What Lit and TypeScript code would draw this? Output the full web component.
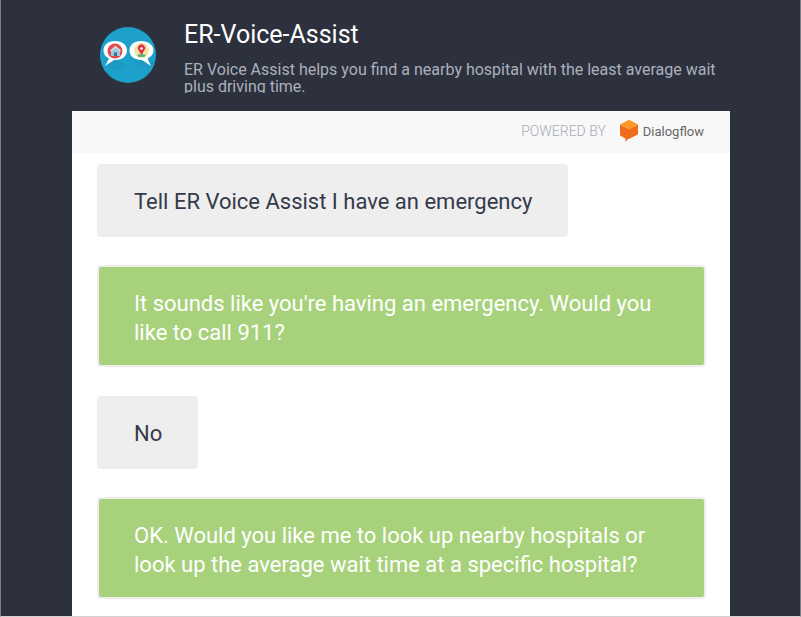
import { LitElement, html, css } from "lit";
import { customElement, property } from "lit/decorators.js";

interface Message {
  from: "user" | "bot";
  text: string;
}

@customElement("chat-bubble")
export class ChatBubble extends LitElement {
  @property({ reflect: true }) from: Message["from"] = "user";
  @property() text = "";

  static styles = css`
    :host {
      display: block;
      box-sizing: border-box;
      padding: 23px 36px 21px 37px;
      border-radius: 4px;
      background: #eeeeee;
      color: #343a49;
      margin-top: 29px;
    }
    :host(:first-child) {
      margin-top: 0;
    }
    :host([from="bot"]) {
      align-self: stretch;
      margin-top: 28px;
      padding: 22px 35px 18px;
      border: 2px solid #eeeeee;
      background: #a7d17b;
      color: #ffffff;
    }
    .text {
      margin: 0;
      font-size: 22px;
      line-height: 29px;
    }
  `;

  render() {
    return html`<p class="text">${this.text}</p>`;
  }
}

@customElement("app-root")
export class AppRoot extends LitElement {
  private messages: Message[] = [
    { from: "user", text: "Tell ER Voice Assist I have an emergency" },
    { from: "bot", text: "It sounds like you're having an emergency. Would you like to call 911?" },
    { from: "user", text: "No" },
    {
      from: "bot",
      text: "OK. Would you like me to look up nearby hospitals or look up the average wait time at a specific hospital?",
    },
  ];

  static styles = css`
    :host {
      display: flex;
      flex-direction: column;
      box-sizing: border-box;
      min-height: 100vh;
      padding: 0 70px 0 71px;
      border: 1px solid #7b7e85;
      border-top: 0;
      border-bottom-color: #d2d2d2;
      background: #2d313e;
      font-family: Roboto, "Liberation Sans", sans-serif;
      font-weight: 400;
    }
    .header {
      display: flex;
      gap: 28px;
      padding: 21px 0 18px 28px;
    }
    .avatar {
      flex: none;
      width: 56px;
      height: 56px;
      margin-top: 6px;
    }
    .about {
      min-width: 0;
      flex: 1;
    }
    .title {
      margin: 0 0 12px;
      font-size: 25px;
      line-height: 28px;
      font-weight: 400;
      color: #ffffff;
    }
    .description {
      margin: 0;
      height: 32px;
      overflow: hidden;
      font-size: 16px;
      line-height: 17px;
      color: #abb0bc;
    }
    .powered {
      display: flex;
      align-items: center;
      justify-content: flex-end;
      box-sizing: border-box;
      height: 42px;
      padding: 0 26px 2px 0;
      background: #f8f8f8;
      font-size: 14px;
      font-weight: 300;
      color: #a6aab8;
    }
    .brand {
      display: flex;
      align-items: center;
      gap: 5px;
      margin-left: 14px;
      color: #666666;
      font-size: 13px;
      font-weight: 400;
      text-decoration: none;
    }
    .brand svg {
      width: 18px;
      height: 22px;
    }
    .chat {
      flex: 1;
      display: flex;
      flex-direction: column;
      align-items: flex-start;
      padding: 11px 24px 17px 25px;
      background: #ffffff;
    }
  `;

  render() {
    return html`
      <header class="header">
        <svg class="avatar" viewBox="0 0 56 56" aria-hidden="true">
          <circle cx="28" cy="28" r="28" fill="#1da1cb" />
          <path d="M7 31 L18 33 L28 39 L20 44 L8 41Z M32 31 L47 33 L55 35 L49 42 L38 38Z" fill="#168aae" opacity=".3" />
          <path d="M15 14C8 14 3.500 18 3.500 23.500C3.500 27 5.500 30 9 31.500L5 39L14 33C22 33.500 27 29 27 23.500C27 18 22 14 15 14Z" fill="#fff" />
          <path d="M41 14C34 14 29.500 18 29.500 23.500C29.500 29 34 33 42 33L51 39L47.500 31.500C51 30 53.500 27 53.500 23.500C53.500 18 48 14 41 14Z" fill="#fff" />
          <circle cx="15" cy="24" r="7.500" fill="#e8474c" />
          <path d="M11 24L15.500 20L20 24V29H11Z" fill="#9cc9dc" />
          <path d="M10.500 24L15.500 19.500L20.500 24" fill="none" stroke="#d9eef5" stroke-width="1.200" />
          <path d="M14 29V25.500H17V29Z" fill="#3f7188" />
          <circle cx="41.500" cy="23.500" r="7.500" fill="#f3e3a5" />
          <ellipse cx="41.500" cy="28.500" rx="4" ry="1.500" fill="#55b580" />
          <path d="M41.500 28L38.800 23.500A3.600 3.600 0 1 1 44.200 23.500Z" fill="#df3240" />
          <circle cx="41.500" cy="21.500" r="1.300" fill="#fff" />
        </svg>
        <div class="about">
          <h1 class="title">ER-Voice-Assist</h1>
          <p class="description">
            ER Voice Assist helps you find a nearby hospital with the least average wait plus driving time.
          </p>
        </div>
      </header>
      <div class="powered">
        <span>POWERED BY</span>
        <a class="brand" href="#">
          <svg viewBox="0 0 18 22" aria-hidden="true">
            <path d="M0 4.500L9 9V18L5.500 22V18.500L.800 16Q0 15.500 0 14.500Z M18 4.500L9 9V19L17.200 14.700Q18 14.200 18 13.200Z" fill="#ef6c1f" />
            <path d="M0 4.500L8 .300Q9-.200 10 .300L18 4.500L9 9.500Z" fill="#ff9a28" />
          </svg>
          <span>Dialogflow</span>
        </a>
      </div>
      <main class="chat">
        ${this.messages.map((m) => html`<chat-bubble from=${m.from} .text=${m.text}></chat-bubble>`)}
      </main>
    `;
  }
}
